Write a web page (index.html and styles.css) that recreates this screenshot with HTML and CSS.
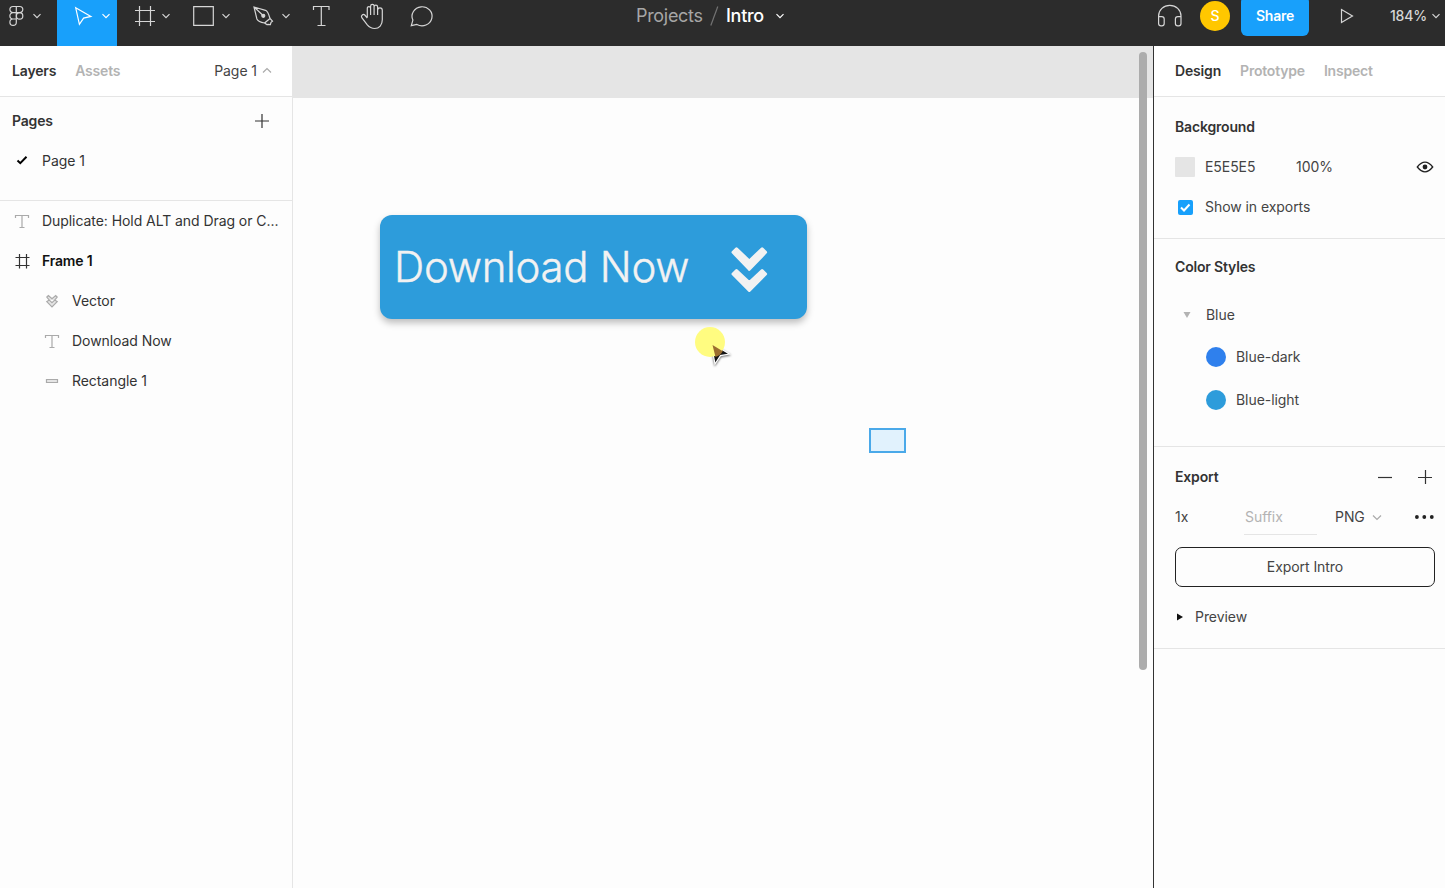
FILE: index.html
```html
<!DOCTYPE html>
<html lang="en">
<head>
<meta charset="utf-8">
<title>Intro</title>
<link rel="stylesheet" href="styles.css">
</head>
<body>
<div class="app">
  <header class="toolbar">
    <nav class="tools">
      <svg class="tool" width="57" height="46" viewBox="0 0 57 46"><path d="M16.3 6.5h-3.3a3.1 3.1 0 0 0 0 6.2h3.3zM16.3 6.5h3.4a3.1 3.1 0 0 1 0 6.2h-3.4zM16.3 12.7h-3.3a3.1 3.1 0 0 0 0 6.3h3.3zM16.3 19h-3.3a3.2 3.2 0 1 0 3.3 3.2z"/><circle cx="19.6" cy="15.9" r="3.2"/><path d="M33.5 14.2l3.5 3.5 3.5-3.5"/></svg>
      <svg class="tool active" width="60" height="46" viewBox="57 0 60 46"><path d="M75.7 7.8l15.2 8.6-7.3 1.7-4.2 6.2z"/><path d="M102.5 14.2l3.5 3.5 3.5-3.5"/></svg>
      <svg class="tool" width="60" height="46" viewBox="117 0 60 46"><path d="M135 10.5h20M135 21.5h20M139.5 6v20M150.5 6v20M162.500 14.200l3.500 3.500 3.500-3.500"/></svg>
      <svg class="tool" width="60" height="46" viewBox="177 0 60 46"><path d="M193.700 6.600h19.600v18.800h-19.600zM222.500 14.200l3.500 3.500 3.500-3.500"/></svg>
      <svg class="tool" width="60" height="46" viewBox="237 0 60 46"><path d="M254 7l11.500 3.300c2.500.9 3.500 5 4.500 8.200l-5.500 4.500c-3.500-.5-6.500-1.500-7.600-4zM254.300 7.300l8 7.500M270 18.500l2.500 2.600-1.500 1.300-.6 2.300-2.200-.3-1.300.2-2.400-1.600"/><circle class="solid" cx="263.300" cy="15.800" r="1.500"/><path d="M282.500 14.200l3.500 3.500 3.500-3.500"/></svg>
      <svg class="tool" width="50" height="46" viewBox="297 0 50 46"><path d="M313.500 10v-3.500h15.500V10M321.300 6.500v19M317.500 25.500h8"/></svg>
      <svg class="tool" width="50" height="46" viewBox="347 0 50 46"><path d="M367.300 17.500V8.200a1.600 1.600 0 0 1 3.300 0V15M370.600 15V6.200a1.700 1.700 0 0 1 3.500 0V15M374.100 15V6.900a1.700 1.700 0 0 1 3.500 0V15M377.600 15v-4.700a2 2 0 0 1 4.700 0v9.500c0 5.200-3 8.700-7.700 8.700-3.300 0-5.500-1.500-7.300-3.600l-5.500-7.200c-1.300-2.300 1.500-4 3-2.700l2.500 3"/></svg>
      <svg class="tool" width="50" height="46" viewBox="397 0 50 46"><path d="M411.300 25.600l1.600-5.500a10 9.500 0 1 1 4 4.300z"/></svg>
    </nav>
    <div class="title"><span class="project">Projects</span><svg width="10" height="22" viewBox="709 5 10 22"><path class="slash" d="M710.800 25.500l7-19"/></svg><span class="file">Intro</span><svg width="12" height="12" viewBox="0 0 12 12"><path class="bright" d="M2.500 4.200L6 7.700l3.500-3.500"/></svg></div>
    <div class="actions">
      <svg class="headphones" width="26" height="26" viewBox="1157 3 26 26"><path d="M1158.600 24v-8a11.200 10.700 0 0 1 22.400 0v8M1158.600 16.700h3.200q2.400 0 2.400 2.400v4.300q0 2.400-2.400 2.400h-.8q-2.400 0-2.400-2.400zM1181 16.700h-3.200q-2.400 0-2.400 2.400v4.300q0 2.400 2.400 2.400h.8q2.400 0 2.400-2.400z"/></svg>
      <span class="avatar">S</span>
      <span class="share">Share</span>
      <svg class="play" width="16" height="18" viewBox="0 0 16 18"><path d="M2.500 2.500v13L13.500 9z"/></svg>
      <span class="zoom">184%</span>
      <svg width="12" height="12" viewBox="0 0 12 12"><path d="M2.500 4.200L6 7.700l3.500-3.500"/></svg>
    </div>
  </header>
  <main class="workspace">
    <aside class="left">
      <div class="tabs"><b>Layers</b><b class="muted">Assets</b><span class="pagepick">Page 1</span><svg width="12" height="12" viewBox="0 0 12 12"><path class="grey" d="M2 7.500L6 3.500l4 4"/></svg></div>
      <section class="pages">
        <div class="row heading"><b>Pages</b><svg width="16" height="16" viewBox="0 0 16 16"><path class="dark" d="M8 1v14M1 8h14"/></svg></div>
        <div class="row"><svg class="glyph" width="20" height="20" viewBox="12 151 20 20"><path class="check" d="M17.500 160.500l2.800 2.700 6.200-6.400"/></svg><span>Page 1</span></div>
      </section>
      <section class="layers">
        <div class="row"><svg class="glyph" width="20" height="20" viewBox="0 0 20 20"><path class="grey" d="M3.500 7V4.500h13V7M10 4.500v12M7.500 16.500h5"/></svg><span>Duplicate: Hold ALT and Drag or C...</span></div>
        <div class="row"><svg class="glyph" width="20" height="20" viewBox="12 251 20 20"><path class="dark" d="M15.500 257.500h14M15.500 265.500h14M19.500 254v14.500M26.500 254v14.500"/></svg><b class="frame">Frame 1</b></div>
        <div class="row child"><svg class="glyph" width="20" height="20" viewBox="0 0 20 20"><path class="grey bar" d="M6.300 4.500L10 7.800l3.700-3.300 1.500 1.600-2.500 3 2.500 1.500L10 16l-5.200-5.400 2.500-1.500-2.500-3zM7.300 9.100l2.700 2.600 2.700-2.600"/></svg><span>Vector</span></div>
        <div class="row child"><svg class="glyph" width="20" height="20" viewBox="0 0 20 20"><path class="grey" d="M3.500 7V4.500h13V7M10 4.500v12M7.500 16.500h5"/></svg><span>Download Now</span></div>
        <div class="row child"><svg class="glyph" width="20" height="20" viewBox="0 0 20 20"><path class="grey bar" d="M4.500 8.500h11v3h-11z"/></svg><span>Rectangle 1</span></div>
      </section>
    </aside>
    <section class="canvas">
      <div class="artboard"></div>
      <div class="download"><span>Download Now</span><svg width="40" height="50" viewBox="729 245 40 50"><path class="chev" d="M733 252.300l3.500-3.500 12.800 12.200 12.800-12.200 3.500 3.500-16.300 17zM733 274l3.500-3.500 12.800 12.200 12.800-12.200 3.500 3.500-16.300 16.500z"/></svg></div>
      <div class="marquee"></div>
      <svg class="pointer" width="44" height="44" viewBox="692 324 44 44"><path class="cursor" d="M711 343l18.500 11-9 1.600-5.500 8.400z"/><circle class="halo" cx="710" cy="342" r="15"/><path class="tip" d="M712.500 345l10.300 6.200q-2 4-7.300 5.800z"/></svg>
      <div class="scrollbar"></div>
    </section>
    <aside class="right">
      <div class="tabs"><b>Design</b><b class="muted">Prototype</b><b class="muted">Inspect</b></div>
      <section class="background">
        <div class="prop"><b>Background</b></div>
        <div class="prop"><i class="swatch"></i><span class="hex">E5E5E5</span><span>100%</span><svg class="end" width="20" height="20" viewBox="0 0 20 20"><path class="eye" d="M2.300 10q7.700-9.600 15.400 0q-7.700 9.600-15.400 0z"/><circle cx="10" cy="10" r="2.400" fill="#222"/></svg></div>
        <div class="prop"><svg class="tick" width="15" height="15" viewBox="0 0 15 15"><rect width="15" height="15" rx="2" fill="#18a0fb"/><path d="M3 7.500l3 3 5.500-6"/></svg><span>Show in exports</span></div>
      </section>
      <section class="styles">
        <div class="prop"><b>Color Styles</b></div>
        <div class="prop group"><svg width="8" height="8" viewBox="0 0 8 8"><path d="M.5 1h7L4 7z" fill="#b3b3b3"/></svg><span>Blue</span></div>
        <div class="prop style"><i class="dot deep"></i><span>Blue-dark</span></div>
        <div class="prop style last"><i class="dot light"></i><span>Blue-light</span></div>
      </section>
      <section class="export">
        <div class="prop"><b>Export</b><svg class="end minus" width="16" height="16" viewBox="0 0 16 16"><path class="dark" d="M1 8.500h14"/></svg><svg class="plus" width="16" height="16" viewBox="0 0 16 16"><path class="dark" d="M8.500 1v14M1 8.500h14"/></svg></div>
        <div class="prop"><span class="scale">1x</span><span class="suffix">Suffix</span><span>PNG</span><svg class="caret" width="12" height="12" viewBox="0 0 12 12"><path class="grey" d="M2 4.500l4 4 4-4"/></svg><svg class="end" width="20" height="6" viewBox="0 0 20 6"><g fill="#222"><circle cx="1.900" cy="3" r="1.900"/><circle cx="9.300" cy="3" r="1.900"/><circle cx="16.800" cy="3" r="1.900"/></g></svg></div>
        <div class="button">Export Intro</div>
        <div class="prop preview"><svg width="10" height="8" viewBox="0 0 10 8"><path d="M2 .5v7L8 4z" fill="#111"/></svg><span>Preview</span></div>
      </section>
    </aside>
  </main>
</div>
</body>
</html>
```

FILE: styles.css
```css
* { box-sizing: border-box; }
body { margin: 0; font: 400 14px/20px Inter, sans-serif; letter-spacing: -.06px; color: #444; background: #fdfdfd; }
b { font-weight: 600; letter-spacing: -.17px; }
svg { display: block; flex: none; fill: none; stroke-width: 1.2; }
.app { width: 1445px; height: 888px; display: flex; flex-direction: column; overflow: hidden; }

.toolbar { height: 46px; flex: none; display: grid; grid-template-columns: 636px 1fr 290px; background: #2c2c2c; }
.toolbar svg { stroke: #d6d6d6; }
.tools { display: flex; }
.tools .active { background: #18a0fb; stroke: #fff; }
.tools .solid { fill: #d6d6d6; }
.title, .actions { display: flex; align-items: center; height: 32px; }
.title { font-size: 18px; letter-spacing: -.3px; color: #a6a6a6; }
.title .file { color: #fff; font-weight: 500; width: 38px; margin: 0 10px 0 7px; }
.title .project { width: 66px; margin-right: 7px; }
.toolbar .slash { stroke: #737373; }
.toolbar .bright { stroke: #fff; }
.avatar { width: 30px; height: 30px; border-radius: 50%; margin-left: 17px; background: #ffc700; color: #fff; display: flex; align-items: center; justify-content: center; font-weight: 500; }
.share { width: 68px; height: 40px; margin-left: 11px; border-radius: 6px; background: #18a0fb; color: #fff; font-weight: 600; letter-spacing: -.2px; display: flex; align-items: center; justify-content: center; }
.play { margin-left: 30px; }
.zoom { width: 37px; margin: 0 3px 0 35px; color: #d6d6d6; font-weight: 500; letter-spacing: -.2px; }
.actions { padding-left: 2px; }

.workspace { flex: 1; min-height: 0; display: grid; grid-template-columns: 293px 860px 292px; }
.left { border-right: 1px solid #e5e5e5; }
.right { border-left: 1px solid #333; }
.tabs { height: 51px; display: flex; align-items: center; border-bottom: 1px solid #e5e5e5; background: #fff; }
.left .tabs { padding: 0 19px 0 12px; gap: 19px; }
.right .tabs { padding-left: 21px; gap: 19px; }
.muted { color: #b3b3b3; letter-spacing: -.2px; }
.left .pagepick { margin-left: auto; margin-right: -15px; }
.grey { stroke: #aaa; }
.dark { stroke: #333; }
.bar { fill: #e5e5e5; }
.check { stroke: #000; stroke-width: 2; }

.pages { height: 104px; padding-top: 4px; border-bottom: 1px solid #e5e5e5; }
.row { height: 40px; display: flex; align-items: center; padding-left: 12px; white-space: nowrap; color: #333; }
.heading { justify-content: space-between; padding-right: 22px; }
.glyph { margin-right: 10px; }
.child { padding-left: 42px; }
.row b.frame { color: #111; }

.canvas { position: relative; padding-top: 52px; background: #e5e5e5; }
.artboard { height: 100%; background: #fdfdfd; }
.download { position: absolute; left: 87px; top: 169px; width: 427px; height: 104px; padding-left: 14px; border-radius: 12px; background: #2d9cdb; box-shadow: 0 4px 7px rgba(0,0,0,.25); display: flex; align-items: center; color: #f2f2f2; font-size: 42px; font-weight: 300; letter-spacing: -.3px; -webkit-text-stroke: .4px #f2f2f2; white-space: nowrap; }
.download span { width: 335px; }
.download svg { margin-top: 6px; }
.chev { fill: #f2f2f2; stroke: #f2f2f2; stroke-width: 3; stroke-linejoin: round; }
.marquee { position: absolute; left: 576px; top: 382px; width: 37px; height: 25px; border: 2px solid #4aa9e9; background: #e1f2fd; }
.pointer { position: absolute; left: 399px; top: 278px; }
.cursor { fill: #151515; stroke: #fff; filter: drop-shadow(0 1px 1px rgba(0,0,0,.6)); }
.halo { fill: #fffc80; }
.tip { fill: #9b6d2f; }
.scrollbar { position: absolute; left: 846px; top: 6px; width: 8px; height: 618px; border-radius: 4px; background: #acacac; }

.prop { height: 40px; display: flex; align-items: center; }
.prop b, .tabs b:first-child { color: #333; }
.background, .styles, .export { border-bottom: 1px solid #e5e5e5; padding-left: 21px; padding-right: 10px; }
.background { height: 142px; padding-top: 10px; }
.styles { height: 208px; padding-top: 8px; }
.export { height: 202px; padding-top: 10px; }
.end { margin-left: auto; }
.swatch { width: 20px; height: 20px; background: #e5e5e5; margin-right: 10px; border-radius: 1px; }
.hex { width: 91px; }
.eye { stroke: #222; stroke-width: 1.300; }
.tick { margin: 0 12px 0 3px; stroke: #fff; stroke-width: 2; }
.tick rect { stroke: none; }
.group { height: 56px; padding-left: 8px; gap: 15px; }
.style { height: 28px; margin-bottom: 8px; padding-left: 31px; gap: 10px; }
.style.last { height: 42px; }
.dot { width: 20px; height: 20px; border-radius: 50%; }
.deep { background: #2f80ed; }
.light { background: #2d9cdb; }
.minus { margin-right: 24px; }
.plus { margin-right: 2px; }
.scale { width: 69px; }
.suffix { width: 73px; height: 35px; padding: 7px 0 0 1px; margin: 0 18px 0 0; border-bottom: 1px solid #e5e5e5; color: #b3b3b3; }
.caret { margin-left: 6px; }
.button { height: 40px; margin-top: 10px; border: 1px solid #222; border-radius: 7px; display: flex; align-items: center; justify-content: center; }
.preview { height: 60px; gap: 10px; }
```
